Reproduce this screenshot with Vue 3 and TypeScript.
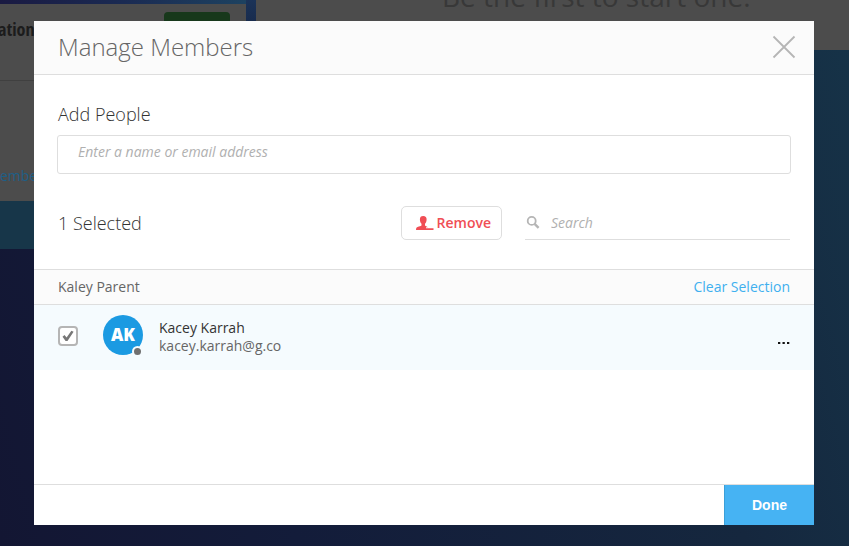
<script setup lang="ts">
import { computed, ref } from 'vue'

interface Member {
  id: number
  name: string
  email: string
  initials: string
  selected: boolean
}

const people = ref('')
const search = ref('')
const members = ref<Member[]>([
  { id: 1, name: 'Kacey Karrah', email: 'kacey.karrah@g.co', initials: 'AK', selected: true },
])

const selectedCount = computed(() => members.value.filter((m) => m.selected).length)

function clearSelection() {
  members.value.forEach((m) => (m.selected = false))
}

function removeSelected() {
  members.value = members.value.filter((m) => !m.selected)
}
</script>

<template>
  <div class="page">
    <div class="backdrop" aria-hidden="true">
      <div class="card">
        <div class="cover"></div>
        <div class="card-head">
          <strong class="card-title">ation</strong>
          <span class="join"></span>
        </div>
        <div class="card-body">
          <span class="card-link">embe</span>
        </div>
        <div class="card-foot"></div>
      </div>
      <div class="feed">Be the first to start one.</div>
    </div>

    <section class="modal" role="dialog" aria-labelledby="modal-title">
      <header class="modal-head">
        <h1 id="modal-title">Manage Members</h1>
        <button class="close" type="button" aria-label="Close">
          <svg width="24" height="24" viewBox="0 0 24 24">
            <path d="M1.500 1.500L22.500 22.500M22.500 1.500L1.500 22.500" fill="none" stroke="#b5b5b5" stroke-width="1.800" />
          </svg>
        </button>
      </header>

      <div class="add">
        <label for="people">Add People</label>
        <input id="people" v-model="people" type="text" placeholder="Enter a name or email address" />
      </div>

      <div class="tools">
        <h2>{{ selectedCount }} Selected</h2>
        <button class="remove" type="button" @click="removeSelected">
          <svg width="18" height="15" viewBox="0 0 18 15" fill="#f04e55">
            <path d="M7.200 0C9.500 0 10.700 1.300 10.600 3.300C10.600 5.500 9.900 7 9 7.800V9.300C9.200 10 10 10.300 11 10.700L12 11.300H10V12.300H17.500V14H0C0 11.500.8 11.100 2.800 10.600C4.400 10.200 5.400 9.900 5.500 9.200V7.800C4.500 7 3.900 5.400 3.900 3.300C3.900 1.200 5 0 7.200 0Z" />
          </svg>
          <span>Remove</span>
        </button>
        <label class="search">
          <svg width="14" height="14" viewBox="0 0 14 14" fill="none" stroke="#b5b5b5">
            <circle cx="5.700" cy="4.900" r="4" stroke-width="1.800" />
            <path d="M8.600 7.800L12.600 11.800" stroke-width="2.400" />
          </svg>
          <input v-model="search" type="text" placeholder="Search" aria-label="Search" />
        </label>
      </div>

      <div class="group">
        <span>Kaley Parent</span>
        <button type="button" @click="clearSelection">Clear Selection</button>
      </div>

      <ul class="members">
        <li v-for="m in members" :key="m.id" :class="{ selected: m.selected }">
          <span class="check">
            <input v-model="m.selected" type="checkbox" :aria-label="m.name" />
            <svg v-if="m.selected" width="20" height="20" viewBox="0 0 20 20">
              <path d="M4.500 10.800L6.500 9L8.600 11.600L13.400 4.700L15.600 5.800L9.500 15H7.600Z" fill="#777" />
            </svg>
          </span>
          <span class="avatar">{{ m.initials }}<i class="status"></i></span>
          <span class="who">
            <span class="name">{{ m.name }}</span>
            <span class="email">{{ m.email }}</span>
          </span>
          <button class="more" type="button" aria-label="More">
            <svg width="12" height="4" viewBox="0 0 12 4" fill="#111">
              <path d="M0 1H2.300V3H0ZM4.500 1H6.800V3H4.500ZM9 1H11.300V3H9Z" />
            </svg>
          </button>
        </li>
      </ul>

      <footer class="modal-foot">
        <button type="button">Done</button>
      </footer>
    </section>
  </div>
</template>

<style>
body {
  margin: 0;
}
</style>

<style scoped>
* {
  box-sizing: border-box;
}

button,
input {
  font: inherit;
}

button {
  padding: 0;
  border: 0;
  background: none;
  cursor: pointer;
}

svg {
  display: block;
}

.page {
  position: relative;
  display: flex;
  min-height: 100vh;
  padding: 21px 35px 21px 34px;
  overflow: hidden;
  background: linear-gradient(75deg, #131633 0%, #131c3a 30%, #15273e 75%, #163348 100%);
  font-family: 'Open Sans', 'Noto Sans', sans-serif;
  font-size: 14px;
  line-height: 18px;
  color: #3f3f3f;
}

/* Dimmed page underneath the dialog */
.backdrop {
  position: absolute;
  inset: 0;
  display: grid;
  grid-template-columns: 246px 1fr;
  align-items: start;
  gap: 10px;
  background: linear-gradient(#1b3358, transparent 60px) 246px 0 / 10px 60px no-repeat;
}

.cover {
  height: 4px;
  background: linear-gradient(90deg, #1a1a42, #1a2a52 50%, #1d4260);
}

.card-head {
  display: flex;
  justify-content: space-between;
  height: 77px;
  padding: 8px 16px 0 0;
  border-bottom: 1px solid #404040;
  background: #4c4c4c;
}

.card-title {
  margin-left: -2px;
  padding-top: 8px;
  font-family: 'Open Sans Condensed', 'Roboto Condensed', 'Liberation Sans Narrow', 'Liberation Sans', sans-serif;
  font-size: 18px;
  color: #1c1c1c;
}

.join {
  width: 66px;
  height: 32px;
  border-radius: 4px;
  background: #17381b;
}

.card-body {
  height: 120px;
  padding-top: 86px;
  background: #4c4c4c;
}

.card-link {
  color: #1e5f87;
}

.card-foot {
  height: 48px;
  background: #173649;
}

.feed {
  height: 54px;
  margin-top: -4px;
  padding-left: 186px;
  background: #4c4c4c;
  color: #383838;
  font-size: 28px;
  line-height: 0;
  white-space: nowrap;
}

.modal {
  position: relative;
  display: flex;
  flex: 1;
  flex-direction: column;
  min-width: 0;
  background: #fff;
}

.modal-head {
  display: flex;
  align-items: center;
  justify-content: space-between;
  height: 54px;
  padding: 0 18px 2px 24px;
  border-bottom: 1px solid #dedede;
  background: #fbfbfb;
}

h1,
h2 {
  margin: 0;
  font-weight: 300;
}

h1 {
  font-size: 24px;
  line-height: 36px;
  color: #666;
}

.add {
  display: flex;
  flex-direction: column;
  gap: 9px;
  padding: 27px 23px 0;
}

.add label,
h2 {
  font-size: 18px;
  font-weight: 300;
  line-height: 24px;
  color: #333;
}

.add label {
  padding-left: 1px;
}

.add input {
  width: 100%;
  height: 39px;
  padding: 0 20px 6px;
  border: 1px solid #dedede;
  border-radius: 3px;
  background: #fff;
}

input::placeholder {
  font-style: italic;
  color: #b0b0b0;
  opacity: 1;
}

.tools {
  display: flex;
  align-items: center;
  padding: 32px 24px 29px;
}

h2 {
  flex: 1;
}

.remove {
  display: flex;
  align-items: center;
  gap: 3px;
  height: 34px;
  padding: 0 10px 0 14px;
  border: 1px solid #dedede;
  border-radius: 5px;
  background: #fff;
  font-weight: 600;
  color: #f04e55;
}

.search {
  display: flex;
  align-items: center;
  gap: 11px;
  width: 265px;
  height: 34px;
  margin-left: 23px;
  padding-left: 1px;
  border-bottom: 1px solid #dedede;
}

.search input {
  flex: 1;
  min-width: 0;
  padding: 0;
  border: 0;
  background: none;
}

input:focus {
  outline: none;
}

.group {
  display: flex;
  align-items: center;
  justify-content: space-between;
  height: 36px;
  padding: 0 24px;
  border-top: 1px solid #dedede;
  border-bottom: 1px solid #dedede;
  background: #fbfbfb;
  color: #666;
}

.group button {
  color: #3fb0ef;
}

.members {
  flex: 1;
  margin: 0;
  padding: 0;
  list-style: none;
}

.members li {
  display: flex;
  align-items: flex-start;
  height: 65px;
  padding: 10px 24px 0;
}

.members .selected {
  background: #f5fbfe;
}

.check {
  position: relative;
  width: 20px;
  height: 20px;
  margin-top: 11px;
}

.check input {
  display: block;
  width: 20px;
  height: 20px;
  margin: 0;
  border: 2px solid #b5b5b5;
  border-radius: 4px;
  background: #fff;
  appearance: none;
}

.check svg {
  position: absolute;
  inset: 0;
  pointer-events: none;
}

.avatar {
  position: relative;
  width: 40px;
  height: 40px;
  margin: 0 16px 0 25px;
  border-radius: 50%;
  background: #1b9ae2;
  font-size: 17px;
  font-weight: 800;
  line-height: 40px;
  text-align: center;
  color: #fff;
}

.status {
  position: absolute;
  right: 0;
  bottom: -2px;
  width: 11px;
  height: 11px;
  border: 2px solid #f5fbfe;
  border-radius: 50%;
  background: #707070;
}

.who {
  display: flex;
  flex: 1;
  flex-direction: column;
  padding-top: 4px;
}

.name {
  color: #333;
}

.email {
  color: #666;
}

.more {
  padding-top: 26px;
}

.modal-foot {
  display: flex;
  justify-content: flex-end;
  height: 41px;
  border-top: 1px solid #dedede;
}

.modal-foot button {
  width: 90px;
  border-left: 1px solid #3b9fd8;
  background: #46b3f3;
  font-family: 'Liberation Sans', Arial, sans-serif;
  font-weight: 700;
  color: #fff;
}
</style>
